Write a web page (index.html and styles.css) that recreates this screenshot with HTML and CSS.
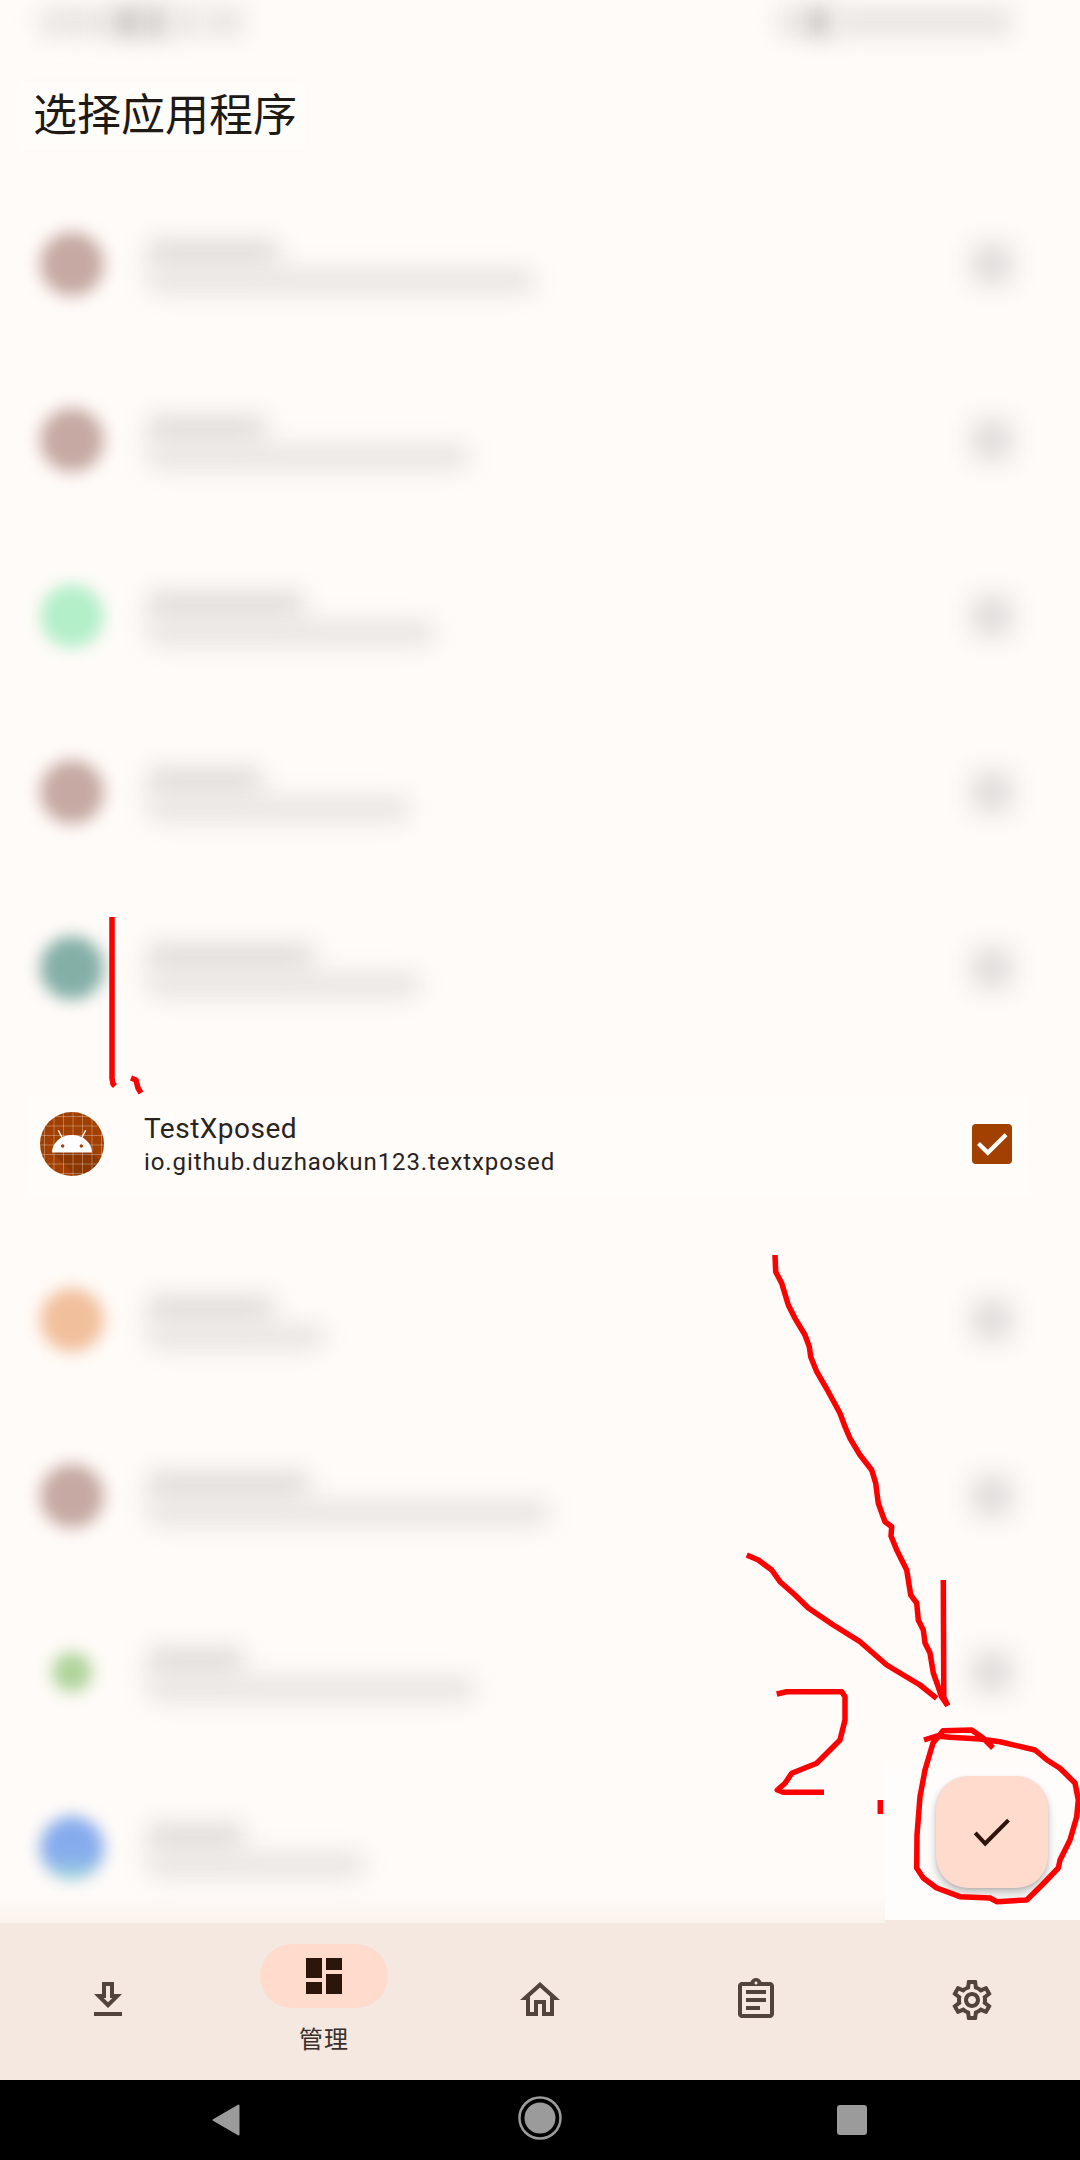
FILE: index.html
```html
<!DOCTYPE html>
<html lang="zh-CN">
<head>
<meta charset="utf-8">
<title>选择应用程序</title>
<link rel="stylesheet" href="styles.css">
</head>
<body>
<div class="app">
  <div class="status">
    <div class="status-group">
      <i class="blot faint" style="width:70px"></i>
      <i class="blot dark" style="width:30px"></i>
      <i class="blot dark" style="width:22px"></i>
      <i class="blot faint" style="width:30px"></i>
      <i class="blot faint" style="width:40px"></i>
    </div>
    <div class="status-group">
      <i class="blot faint" style="width:24px"></i>
      <i class="blot dark" style="width:28px"></i>
      <i class="blot faint" style="width:176px"></i>
    </div>
  </div>
  <header class="header"><h1 class="title">选择应用程序</h1></header>

  <main class="list">
    <div class="row"><i class="avatar taupe"></i><div class="bars"><i class="bar-title" style="width:130px"></i><i class="bar-sub" style="width:385px"></i></div><i class="box-blur"></i></div>
    <div class="row"><i class="avatar taupe"></i><div class="bars"><i class="bar-title" style="width:117px"></i><i class="bar-sub" style="width:320px"></i></div><i class="box-blur"></i></div>
    <div class="row"><i class="avatar mint"></i><div class="bars"><i class="bar-title" style="width:155px"></i><i class="bar-sub" style="width:285px"></i></div><i class="box-blur"></i></div>
    <div class="row"><i class="avatar taupe"></i><div class="bars"><i class="bar-title" style="width:113px"></i><i class="bar-sub" style="width:260px"></i></div><i class="box-blur"></i></div>
    <div class="row"><i class="avatar teal"></i><div class="bars"><i class="bar-title" style="width:165px"></i><i class="bar-sub" style="width:270px"></i></div><i class="box-blur"></i></div>

    <div class="row selected">
      <svg class="app-icon" viewBox="0 0 64 64" aria-hidden="true">
        <defs><clipPath id="disc"><circle cx="32" cy="32" r="32"/></clipPath></defs>
        <g clip-path="url(#disc)">
          <rect width="64" height="64" fill="#a14000"/>
          <path d="M12 40.5H52L64 52V64H36Z" fill="#7f3200" opacity=".6"/>
          <path d="M4.500 0V64M14 0V64M23.500 0V64M33 0V64M42.500 0V64M52 0V64M61.500 0V64M0 4.500H64M0 14H64M0 23.500H64M0 33H64M0 42.500H64M0 52H64M0 61.500H64" stroke="#fff" stroke-opacity=".3" stroke-width="1" fill="none"/>
        </g>
        <path d="M18.300 18.300L22.700 26.600M45.700 18.300L41.300 26.600" stroke="#fff" stroke-width="1.300" fill="none"/>
        <path d="M12 40.500A20 17.500 0 0 1 52 40.500Z" fill="#fff"/>
        <circle cx="22.700" cy="34" r="1.700" fill="#a14000"/>
        <circle cx="41.300" cy="34" r="1.700" fill="#a14000"/>
      </svg>
      <div class="texts">
        <div class="app-name">TestXposed</div>
        <div class="app-pkg">io.github.duzhaokun123.textxposed</div>
      </div>
      <svg class="checkbox" viewBox="0 0 40 40" aria-hidden="true">
        <rect width="40" height="40" rx="4" fill="#a14000"/>
        <path d="M6.500 19.500L15.800 28.700L34 10.700" stroke="#fff" stroke-width="4.200" fill="none"/>
      </svg>
    </div>

    <div class="row"><i class="avatar peach"></i><div class="bars"><i class="bar-title" style="width:125px"></i><i class="bar-sub" style="width:175px"></i></div><i class="box-blur"></i></div>
    <div class="row"><i class="avatar taupe"></i><div class="bars"><i class="bar-title" style="width:160px"></i><i class="bar-sub" style="width:400px"></i></div><i class="box-blur"></i></div>
    <div class="row"><i class="avatar leaf"></i><div class="bars"><i class="bar-title" style="width:95px"></i><i class="bar-sub" style="width:325px"></i></div><i class="box-blur"></i></div>
    <div class="row"><i class="avatar sky"></i><div class="bars"><i class="bar-title" style="width:95px"></i><i class="bar-sub" style="width:215px"></i></div><i class="box-blur"></i></div>
  </main>

  <nav class="nav">
    <div class="nav-item">
      <svg class="nav-icon" viewBox="0 0 24 24"><path d="M19 9h-4V3H9v6H5l7 7 7-7zm-8 2V5h2v6h1.170L12 13.170 9.830 11H11zm-6 7h14v2H5z"/></svg>
    </div>
    <div class="nav-item">
      <div class="pill">
        <svg class="nav-icon active" viewBox="0 0 24 24"><path d="M3 13h8V3H3v10zm0 8h8v-6H3v6zm10 0h8V11h-8v10zm0-18v6h8V3h-8z"/></svg>
      </div>
      <span class="nav-label">管理</span>
    </div>
    <div class="nav-item">
      <svg class="nav-icon" viewBox="0 0 24 24"><path d="M12 5.690l5 4.500V18h-2v-6H9v6H7v-7.810l5-4.500M12 3L2 12h3v8h6v-6h2v6h6v-8h3L12 3z"/></svg>
    </div>
    <div class="nav-item">
      <svg class="nav-icon" viewBox="0 0 24 24"><path d="M7 15h7v2H7zm0-4h10v2H7zm0-4h10v2H7zm12-4h-4.180C14.400 1.840 13.300 1 12 1c-1.300 0-2.400.84-2.820 2H5c-.14 0-.27.01-.4.04-.39.08-.74.28-1.010.55-.18.18-.33.4-.43.64-.1.23-.16.49-.16.77v14c0 .27.06.54.16.78s.25.45.43.64c.27.27.62.47 1.010.55.13.02.26.03.4.03h14c1.100 0 2-.9 2-2V5c0-1.100-.9-2-2-2zm-7-.25c.41 0 .75.34.75.75s-.34.75-.75.75-.75-.34-.75-.75.34-.75.75-.75zM19 19H5V5h14v14z"/></svg>
    </div>
    <div class="nav-item">
      <svg class="nav-icon" viewBox="0 0 24 24"><path d="M19.430 12.980c.04-.32.07-.64.07-.98 0-.34-.03-.66-.07-.98l2.110-1.650c.19-.15.24-.42.12-.64l-2-3.460c-.09-.16-.26-.25-.44-.25-.06 0-.12.01-.17.03l-2.490 1c-.52-.4-1.080-.73-1.690-.98l-.38-2.650C14.460 2.180 14.250 2 14 2h-4c-.25 0-.46.18-.49.42l-.38 2.650c-.61.25-1.170.59-1.690.98l-2.490-1c-.06-.02-.12-.03-.18-.03-.17 0-.34.09-.43.25l-2 3.460c-.13.22-.07.49.12.64l2.110 1.650c-.04.32-.07.65-.07.98 0 .33.03.66.07.98l-2.110 1.650c-.19.15-.24.42-.12.64l2 3.460c.09.16.26.25.44.25.06 0 .12-.01.17-.03l2.490-1c.52.4 1.080.73 1.690.98l.38 2.650c.03.24.24.42.49.42h4c.25 0 .46-.18.49-.42l.38-2.650c.61-.25 1.170-.59 1.690-.98l2.490 1c.06.02.12.03.18.03.17 0 .34-.09.43-.25l2-3.460c.12-.22.07-.49-.12-.64l-2.110-1.650zm-1.980-1.710c.04.31.05.52.05.73 0 .21-.02.43-.05.73l-.14 1.130.89.7 1.080.84-.7 1.210-1.270-.51-1.040-.42-.9.68c-.43.32-.84.56-1.250.73l-1.060.43-.16 1.130-.2 1.350h-1.400l-.19-1.350-.16-1.130-1.060-.43c-.43-.18-.83-.41-1.230-.71l-.91-.7-1.060.43-1.270.51-.7-1.210 1.080-.84.89-.7-.14-1.130c-.03-.31-.05-.54-.05-.74s.02-.43.05-.73l.14-1.130-.89-.7-1.080-.84.7-1.210 1.270.51 1.040.42.9-.68c.43-.32.84-.56 1.250-.73l1.060-.43.16-1.130.2-1.350h1.390l.19 1.350.16 1.130 1.060.43c.43.18.83.41 1.230.71l.91.7 1.060-.43 1.270-.51.7 1.210-1.070.85-.89.7.14 1.130zM12 8c-2.210 0-4 1.790-4 4s1.790 4 4 4 4-1.790 4-4-1.790-4-4-4zm0 6c-1.100 0-2-.9-2-2s.9-2 2-2 2 .9 2 2-.9 2-2 2z"/></svg>
    </div>
  </nav>

  <div class="sysbar">
    <svg class="sys-back" viewBox="0 0 28 32"><path d="M26.500 1.500V30.500L1.500 16Z" fill="#9b9b9b" stroke="#9b9b9b" stroke-width="2" stroke-linejoin="round"/></svg>
    <svg class="sys-home" viewBox="0 0 44 44"><circle cx="22" cy="22" r="20.500" fill="none" stroke="#9b9b9b" stroke-width="2.500"/><circle cx="22" cy="22" r="15.500" fill="#9b9b9b"/></svg>
    <i class="sys-recent"></i>
  </div>

  <div class="fab-clear"></div>
  <button class="fab" type="button" aria-label="确定">
    <svg class="fab-icon" viewBox="0 0 48 48"><path d="M7.200 24.800L17.200 35.500L40.500 12.200" stroke="#2c160c" stroke-width="4" fill="none"/></svg>
  </button>

  <svg class="ink" viewBox="0 0 1080 2160" aria-hidden="true">
    <polyline points="112,917 112,1078 113,1084 115,1086"/>
    <polyline points="131,1078 136,1080 138,1088 141,1093"/>
    <polyline points="775,1255 775.700,1271.700 781.700,1283.300 788.300,1305 795,1318.300 805,1335 809.300,1346.700 810.700,1356.700 816.700,1371.700 828.300,1391.700 840,1413.300 845,1426.700 850,1438.300 860,1455 871.700,1470 875.700,1483.300 878.300,1503.300 885,1521.700 891.700,1526.700 891,1536 896.700,1550 906.700,1570 910.700,1595 916.700,1603 918.300,1620 923.300,1630 925,1643 930,1653 933.300,1673 938.300,1687 941.700,1697 947.700,1705.700"/>
    <polyline points="943.300,1580 943.800,1697 947.700,1705.700"/>
    <polyline points="746.700,1555 758.300,1560 771.700,1570 780,1581.700 795,1595 808.300,1608 833.300,1625 860,1641.700 886.700,1665 920,1685 936.700,1698.300"/>
    <polyline points="776.700,1694 786.700,1691.700 841.700,1691.700 845,1696.700 845,1720 840,1740 830,1750 816.700,1763.300 791.700,1773.300 785,1783.300 777.300,1790 783.300,1792.300 824,1792.300"/>
    <polyline points="880.300,1800 880.300,1814"/>
    <polyline points="924,1740 936.700,1736 950,1737.300 980,1739 1000,1741.700 1035,1750 1047,1760 1060,1768.300 1075,1783 1078.300,1800 1076.700,1816.700 1070,1840 1060,1860 1058.300,1868 1042,1885 1026.700,1900 996.700,1901.700 990,1898 960,1896.700 936.700,1888 923.300,1878 916.700,1868 917,1835 920,1796.700 925,1770 933,1743 943,1730.700 971.700,1730 983,1738 993,1748"/>
  </svg>
</div>
</body>
</html>
```
FILE: styles.css
```css
* { box-sizing: border-box; }
html, body { margin: 0; padding: 0; }
body { background: #fffbf8; font-family: Roboto, "Noto Sans CJK SC", sans-serif; }
i { display: block; }

.app {
  position: relative;
  width: 1080px;
  height: 2160px;
  overflow: hidden;
  display: flex;
  flex-direction: column;
  background: #fffbf8;
}

/* blurred status bar */
.status {
  height: 81px;
  flex: none;
  padding: 7px 68px 0 40px;
  display: flex;
  justify-content: space-between;
}
.status-group { display: flex; gap: 3px; height: 30px; }
.blot { height: 30px; filter: blur(11px); }
.blot.faint { background: #e9e6e3; }
.blot.dark { background: #c9c6c3; }

/* title */
.header { height: 95px; flex: none; padding-left: 20px; align-self: stretch; }
.title {
  display: inline-block;
  margin: 0;
  height: 69px;
  padding: 0 8px 0 13px;
  background: #fffdfa;
  box-shadow: 0 0 14px rgba(120, 90, 70, .012);
  font: 400 44px/62px "Noto Sans CJK SC", sans-serif;
  color: #201a17;
}

/* list */
.list { flex: 1; min-height: 0; overflow: hidden; position: relative; }
.row {
  position: relative;
  height: 176px;
  display: flex;
  align-items: center;
  padding: 0 68px 0 40px;
}
.avatar { width: 64px; height: 64px; flex: none; border-radius: 50%; filter: blur(8px); }
.avatar.taupe { background: #c6a9a2; }
.avatar.mint { background: #b3efc9; }
.avatar.teal { background: #84afa7; }
.avatar.peach { background: #f1bf9b; }
.avatar.leaf { width: 40px; height: 40px; margin: 0 12px; background: #afd399; }
.avatar.sky { background: linear-gradient(#86abed 60%, #9ad4da); }
.bars { flex: 1; margin-left: 40px; padding: 4px 0 0 4px; display: flex; flex-direction: column; gap: 4px; }
.bar-title { height: 26px; background: #dfdcd9; filter: blur(12px); }
.bar-sub { height: 22px; background: #e4e1de; filter: blur(12px); }
.box-blur { width: 40px; height: 40px; flex: none; background: #e0dddb; filter: blur(12px); }

/* selected row */
.row.selected::before {
  content: "";
  position: absolute;
  left: 30px;
  top: 41px;
  width: 1000px;
  height: 100px;
  background: #fffcf9;
}
.app-icon { position: relative; width: 64px; height: 64px; flex: none; display: block; }
.texts { position: relative; flex: 1; margin-left: 40px; padding-top: 3px; }
.app-name { font-size: 28px; line-height: 32px; letter-spacing: .5px; color: #29231f; }
.app-pkg { margin-top: 1px; font-size: 24px; line-height: 32px; letter-spacing: .9px; color: #29231f; }
.checkbox { position: relative; width: 40px; height: 40px; flex: none; display: block; }

/* bottom navigation */
.nav {
  position: relative;
  flex: none;
  height: 160px;
  background: #f5e8e0;
  display: grid;
  grid-template-columns: repeat(5, 216px);
}
.nav::before {
  content: "";
  position: absolute;
  left: 0;
  top: -27px;
  width: 885px;
  height: 30px;
  background: linear-gradient(rgba(251, 243, 238, 0), #fbf3ee);
}
.nav-item {
  position: relative;
  display: flex;
  flex-direction: column;
  align-items: center;
  justify-content: center;
}
.nav-icon { width: 48px; height: 48px; display: block; fill: #52443c; }
.nav-icon.active { fill: #2c160c; }
.pill {
  width: 128px;
  height: 64px;
  border-radius: 32px;
  background: #ffdbcd;
  display: flex;
  align-items: center;
  justify-content: center;
}
.nav-label {
  margin-top: 12px;
  font: 400 24px/36px "Noto Sans CJK SC", sans-serif;
  letter-spacing: 1px;
  color: #3a2f2a;
}

/* system bar */
.sysbar {
  flex: none;
  height: 80px;
  background: #000;
  display: flex;
  align-items: center;
  padding-left: 212px;
}
.sys-back { width: 28px; height: 32px; display: block; }
.sys-home { width: 44px; height: 44px; display: block; margin: -4px 275px 0 278px; }
.sys-recent { width: 30px; height: 30px; border-radius: 3px; background: #9b9b9b; }

/* FAB */
.fab-clear {
  position: absolute;
  left: 885px;
  top: 1757px;
  width: 195px;
  height: 163px;
  background: linear-gradient(#fffbf8, #fffdfb 20px);
}
.fab {
  position: absolute;
  left: 936px;
  top: 1776px;
  width: 112px;
  height: 112px;
  padding: 0;
  border: 0;
  border-radius: 32px;
  background: #ffdbcd;
  box-shadow: 0 6px 10px rgba(0, 0, 0, .22), 0 1px 3px rgba(0, 0, 0, .12);
  display: flex;
  align-items: center;
  justify-content: center;
}
.fab-icon { width: 48px; height: 48px; display: block; }

/* red hand-drawn annotation */
.ink {
  position: absolute;
  left: 0;
  top: 0;
  width: 1080px;
  height: 2160px;
  pointer-events: none;
}
.ink polyline {
  fill: none;
  stroke: #ff0000;
  stroke-width: 5.500;
  stroke-linejoin: round;
  stroke-linecap: butt;
}
```
